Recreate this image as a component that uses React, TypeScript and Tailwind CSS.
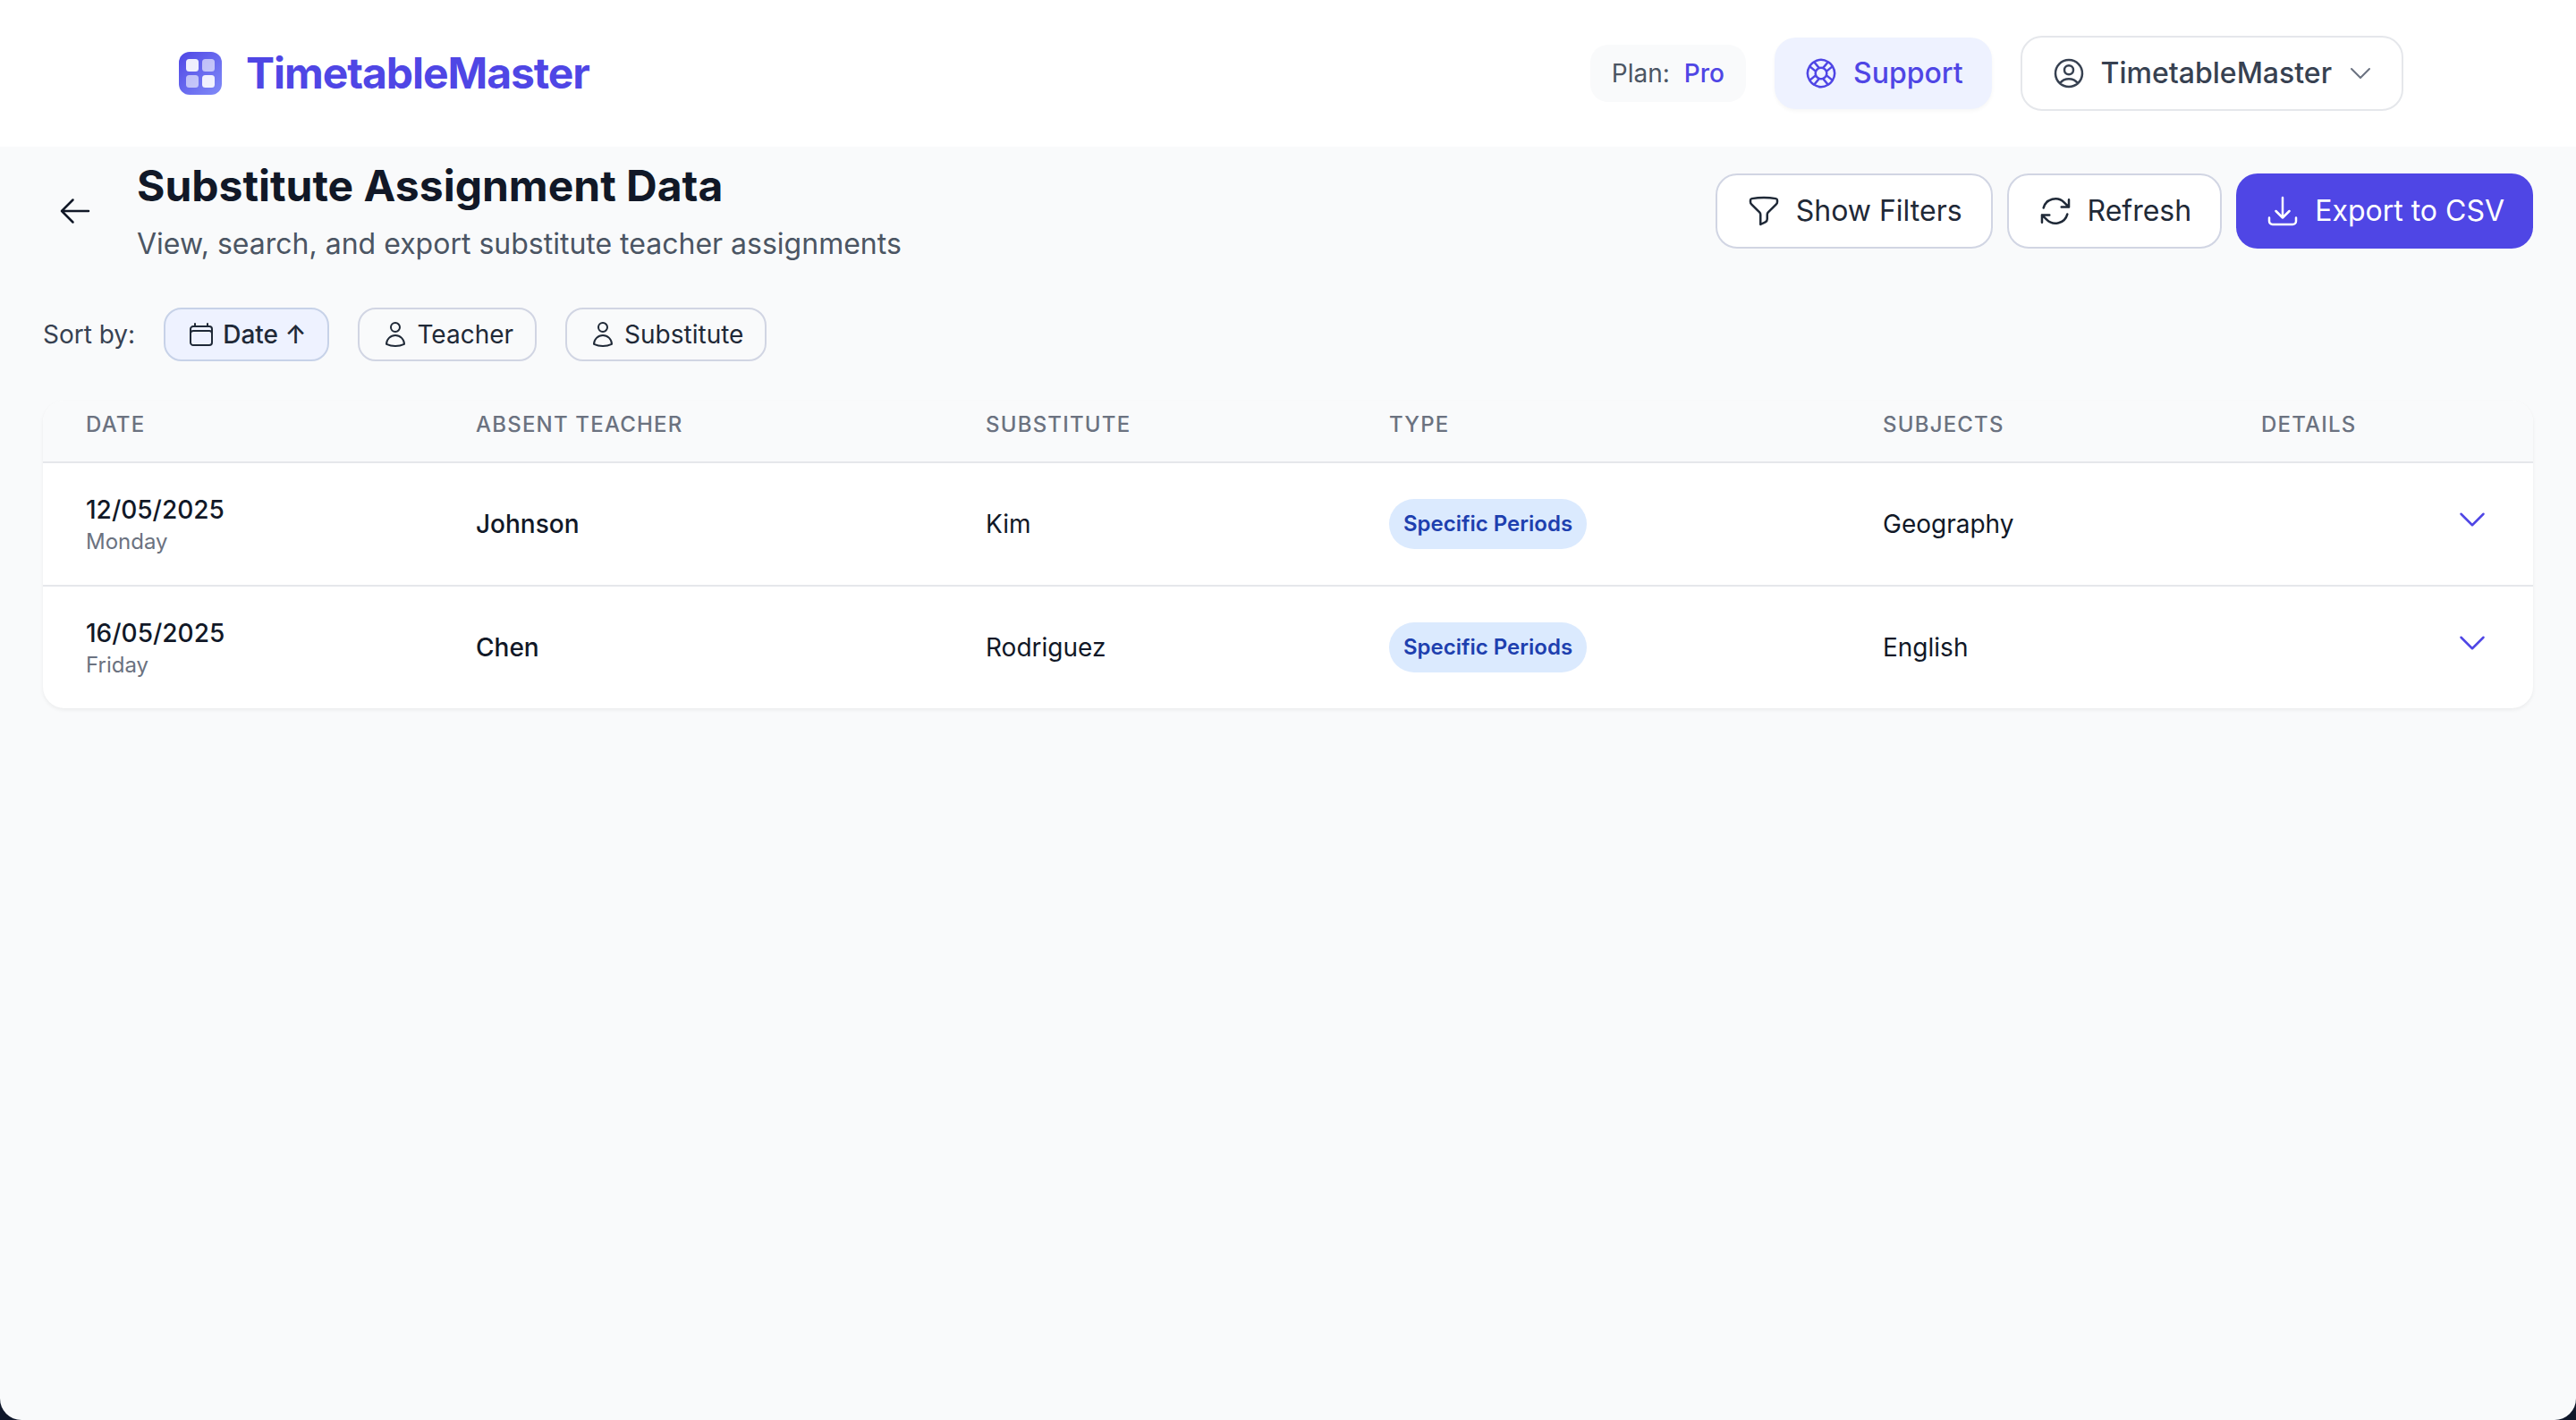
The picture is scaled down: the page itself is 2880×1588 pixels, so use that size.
import React from "react";
import {
  HiOutlineArrowLeft,
  HiOutlineArrowDownTray,
  HiOutlineArrowPath,
  HiOutlineCalendar,
  HiOutlineChevronDown,
  HiOutlineFunnel,
  HiOutlineLifebuoy,
  HiOutlineUser,
  HiOutlineUserCircle,
} from "react-icons/hi2";

function Logo() {
  return (
    <svg width="48" height="48" viewBox="0 0 48 48" className="shrink-0">
      <defs>
        <linearGradient id="logoGrad" x1="0" y1="0" x2="1" y2="1">
          <stop offset="0" stopColor="#4f46e5" />
          <stop offset="1" stopColor="#818cf8" />
        </linearGradient>
      </defs>
      <rect width="48" height="48" rx="12" fill="url(#logoGrad)" />
      <rect x="8" y="8" width="14" height="14" rx="3.5" fill="#fff" fillOpacity="0.9" />
      <rect x="26" y="8" width="14" height="14" rx="3.5" fill="#fff" fillOpacity="0.6" />
      <rect x="8" y="26" width="14" height="14" rx="3.5" fill="#fff" fillOpacity="0.6" />
      <rect x="26" y="26" width="14" height="14" rx="3.5" fill="#fff" fillOpacity="0.9" />
    </svg>
  );
}

const rows = [
  { date: "12/05/2025", day: "Monday", teacher: "Johnson", sub: "Kim", subject: "Geography" },
  { date: "16/05/2025", day: "Friday", teacher: "Chen", sub: "Rodriguez", subject: "English" },
];

export default function App() {
  return (
    <div className="h-[1588px] bg-[#0f172a] font-['Inter',sans-serif] overflow-hidden">
      <div className="h-full flex flex-col bg-[#f9fafb] rounded-b-[24px] overflow-hidden">
        <header className="h-[164px] shrink-0 bg-white flex items-center justify-between pl-[200px] pr-[193px]">
          <div className="flex items-center gap-[27px]">
            <Logo />
            <span className="text-[48px] leading-[64px] font-bold tracking-[-0.022em] text-[#4f46e5]">
              TimetableMaster
            </span>
          </div>
          <div className="flex items-center gap-[32px]">
            <div className="h-[64px] px-[24px] rounded-[20px] bg-[#f9fafb] flex items-center text-[28px] leading-[40px]">
              <span className="text-[#4b5563]">Plan:</span>
              <span className="ml-[16px] font-medium text-[#4f46e5]">Pro</span>
            </div>
            <button className="h-[80px] px-[32px] rounded-[24px] bg-[#eef2ff] shadow-[0_2px_4px_rgba(0,0,0,0.04)] flex items-center gap-[16px] text-[32px] leading-[48px] font-medium text-[#4f46e5]">
              <HiOutlineLifebuoy className="w-[40px] h-[40px]" />
              Support
            </button>
            <button className="h-[84px] pl-[32px] pr-[30px] rounded-[24px] bg-white border-2 border-[#e5e7eb] flex items-center text-[32px] leading-[48px] font-medium text-[#374151]">
              <HiOutlineUserCircle className="w-[40px] h-[40px]" />
              <span className="ml-[16px]">TimetableMaster</span>
              <HiOutlineChevronDown className="ml-[16px] w-[32px] h-[32px] text-[#6b7280]" />
            </button>
          </div>
        </header>

        <main className="flex-1 px-[48px] pt-[12px]">
          <div className="flex items-center justify-between">
            <div className="flex items-center">
              <button className="p-[16px] mr-[33px] text-[#111827]">
                <HiOutlineArrowLeft className="w-[40px] h-[40px]" />
              </button>
              <div>
                <h1 className="text-[48px] leading-[64px] font-bold text-[#111827]">Substitute Assignment Data</h1>
                <p className="mt-[9px] text-[32px] leading-[47px] text-[#4b5563]">
                  View, search, and export substitute teacher assignments
                </p>
              </div>
            </div>
            <div className="flex items-center gap-[16px]">
              <button className="h-[84px] px-[32px] rounded-[24px] bg-white border-2 border-[#d1d5e3] flex items-center gap-[16px] text-[32px] leading-[48px] text-[#1f2937]">
                <HiOutlineFunnel className="w-[40px] h-[40px]" />
                Show Filters
              </button>
              <button className="h-[84px] px-[32px] rounded-[24px] bg-white border-2 border-[#d1d5e3] flex items-center gap-[16px] text-[32px] leading-[48px] text-[#1f2937]">
                <HiOutlineArrowPath className="w-[40px] h-[40px]" />
                Refresh
              </button>
              <button className="h-[84px] px-[32px] rounded-[24px] bg-[#4f46e5] flex items-center gap-[16px] text-[32px] leading-[48px] text-white">
                <HiOutlineArrowDownTray className="w-[40px] h-[40px]" />
                Export to CSV
              </button>
            </div>
          </div>

          <div className="mt-[48px] flex items-center text-[28px] leading-[40px]">
            <span className="text-[#374151] mr-[32px]">Sort by:</span>
            <div className="flex items-center gap-[32px] text-[#1f2937]">
              <button className="h-[60px] px-[24px] rounded-[20px] bg-[#eef2ff] border-2 border-[#c7d2e8] flex items-center gap-[8px] font-medium">
                <HiOutlineCalendar className="w-[32px] h-[32px]" />
                Date ↑
              </button>
              <button className="h-[60px] px-[24px] rounded-[20px] border-2 border-[#d1d5e3] flex items-center gap-[8px]">
                <HiOutlineUser className="w-[32px] h-[32px]" />
                Teacher
              </button>
              <button className="h-[60px] px-[24px] rounded-[20px] border-2 border-[#d1d5e3] flex items-center gap-[8px]">
                <HiOutlineUser className="w-[32px] h-[32px]" />
                Substitute
              </button>
            </div>
          </div>

          <div className="mt-[44px] rounded-[24px] bg-white shadow-[0_2px_4px_rgba(0,0,0,0.06)] overflow-hidden">
            <table className="w-full table-fixed border-separate border-spacing-0 text-left">
              <thead className="bg-[#f9fafb]">
                <tr className="text-[24px] leading-[32px] tracking-[0.05em] text-[#6b7280]">
                  <th className="w-[436px] pl-[48px] pt-[11px] pb-[25px] font-medium border-b-2 border-[#e5e7eb]">DATE</th>
                  <th className="w-[570px] pl-[48px] pt-[11px] pb-[25px] font-medium border-b-2 border-[#e5e7eb]">ABSENT TEACHER</th>
                  <th className="w-[451px] pl-[48px] pt-[11px] pb-[25px] font-medium border-b-2 border-[#e5e7eb]">SUBSTITUTE</th>
                  <th className="w-[552px] pl-[48px] pt-[11px] pb-[25px] font-medium border-b-2 border-[#e5e7eb]">TYPE</th>
                  <th className="w-[423px] pl-[48px] pt-[11px] pb-[25px] font-medium border-b-2 border-[#e5e7eb]">SUBJECTS</th>
                  <th className="pl-[48px] pt-[11px] pb-[25px] font-medium border-b-2 border-[#e5e7eb]">DETAILS</th>
                </tr>
              </thead>
              <tbody className="text-[28px] leading-[40px] text-[#111827]">
                {rows.map((r, i) => {
                  const b = i === 0 ? "border-b-2 border-[#e5e7eb]" : "";
                  return (
                    <tr key={r.date}>
                      <td className={`pl-[48px] py-[32px] ${b}`}>
                        <div className="font-medium">{r.date}</div>
                        <div className="text-[24px] leading-[32px] text-[#6b7280]">{r.day}</div>
                      </td>
                      <td className={`pl-[48px] py-[32px] font-medium ${b}`}>{r.teacher}</td>
                      <td className={`pl-[48px] py-[32px] ${b}`}>{r.sub}</td>
                      <td className={`pl-[48px] py-[32px] ${b}`}>
                        <span className="inline-flex align-middle px-[16px] py-[12px] rounded-full bg-[#dbeafe] text-[24px] leading-[32px] font-semibold text-[#1e40af]">
                          Specific Periods
                        </span>
                      </td>
                      <td className={`pl-[48px] py-[32px] ${b}`}>{r.subject}</td>
                      <td className={`pr-[48px] py-[32px] ${b}`}>
                        <button className="block ml-auto mb-[10px] text-[#4f46e5]">
                          <HiOutlineChevronDown className="block w-[40px] h-[40px]" />
                        </button>
                      </td>
                    </tr>
                  );
                })}
              </tbody>
            </table>
          </div>
        </main>
      </div>
    </div>
  );
}
